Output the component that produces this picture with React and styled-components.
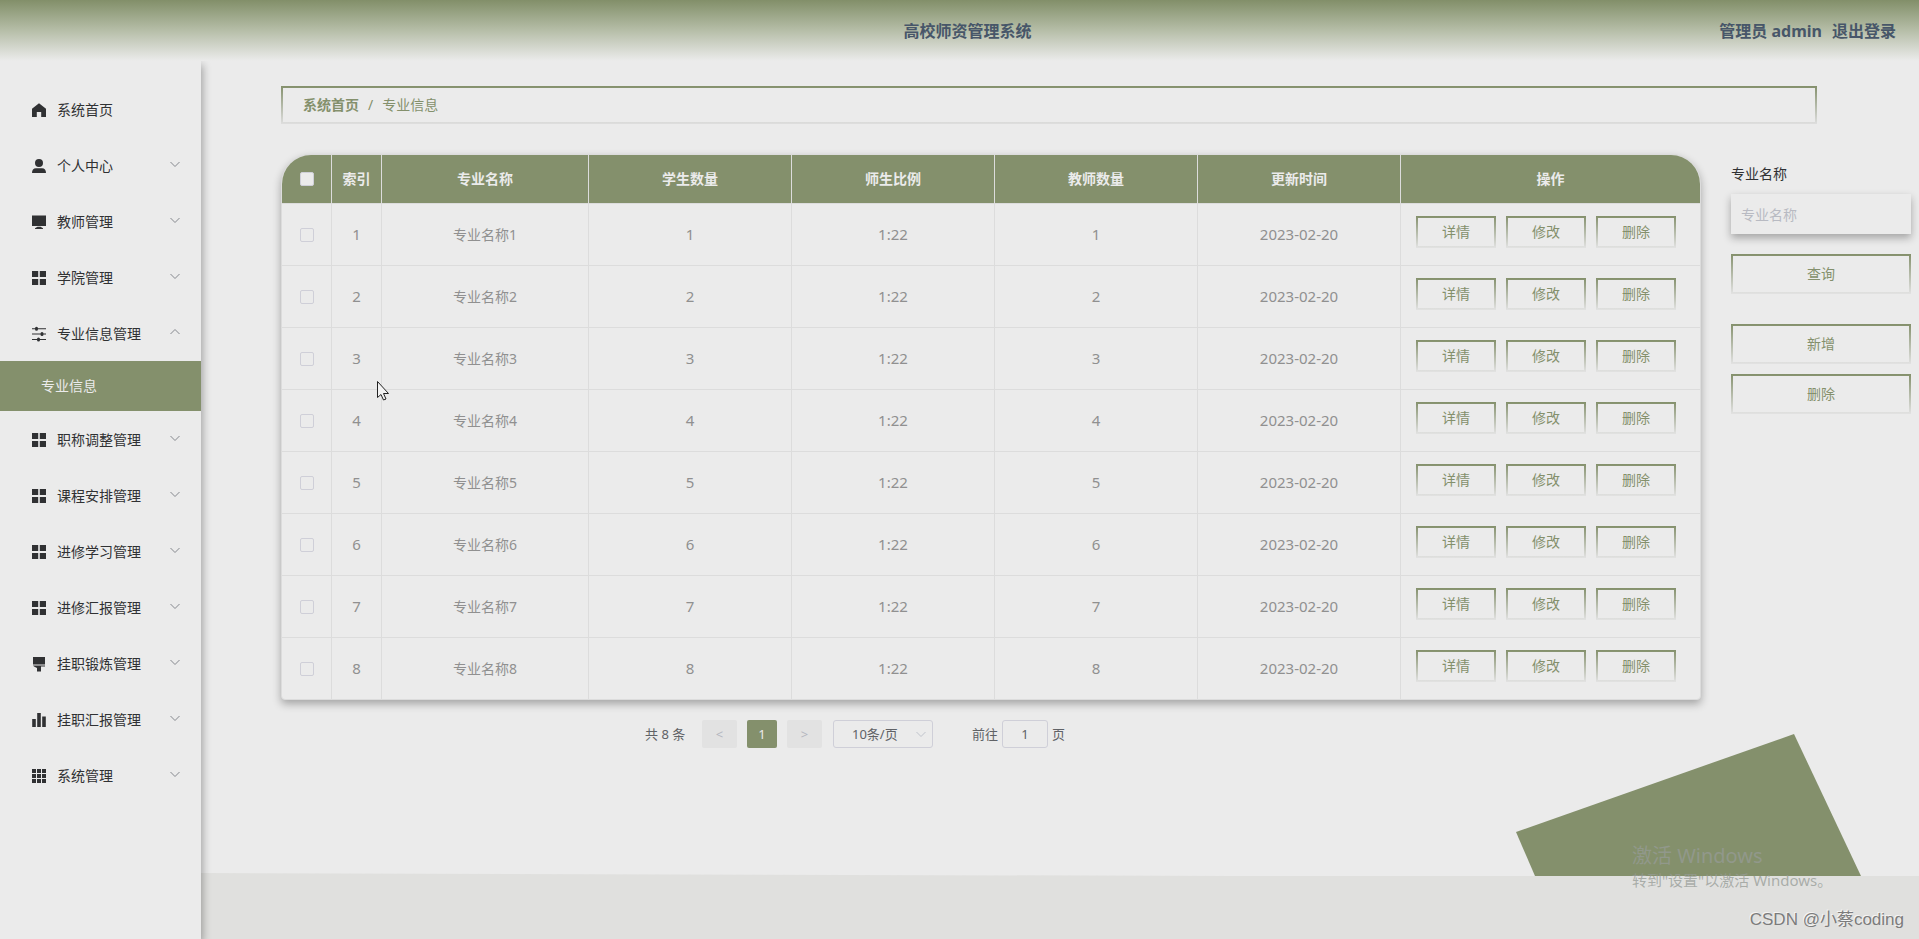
import React, { useState } from 'react';
import styled, { createGlobalStyle } from 'styled-components';

const GlobalStyle = createGlobalStyle`
* {
	box-sizing: border-box;
}
body {
	margin: 0;
	background-color: #ebebeb;
	color: #303133;
	font-family: "Noto Sans", "Noto Sans CJK SC", sans-serif;
	font-size: 14px;
	line-height: 20px;
}
button, input, select {
	font-family: inherit;
	font-size: 14px;
	line-height: 20px;
	margin: 0;
}
`;
const PageStyle = styled.div`
position: relative;
display: flex;
flex-direction: column;
min-height: 100vh;
overflow: hidden;
`;
const HeaderStyle = styled.header`
display: grid;
grid-template-columns: 1fr auto 1fr;
align-items: center;
height: 61px;
padding: 1px 23px 0 39px;
background: linear-gradient(#828f69, #b6bea8 50%, #ebebeb);
color: #475669;
font-size: 16px;
font-weight: 700;
`;
const TitleStyle = styled.h1`
grid-column: 2;
margin: 0;
font-size: 16px;
font-weight: 700;
`;
const UserStyle = styled.div`
display: flex;
justify-content: flex-end;
gap: 10px;
`;
const LogoutStyle = styled.a`
color: inherit;
text-decoration: none;
`;
const BodyStyle = styled.div`
display: flex;
flex: 1;
`;
const SideStyle = styled.nav`
width: 201px;
flex-shrink: 0;
padding-top: 20px;
background-color: #ebebeb;
box-shadow: 2px 4px 8px rgba(0, 0, 0, 0.3);
clip-path: inset(0 -12px 0 0);
`;
const MenuButton = styled.button`
display: flex;
align-items: center;
width: 100%;
height: 56px;
padding: 2px 20px 0 31px;
border: 0;
background: none;
color: #303133;
text-align: left;
cursor: pointer;
`;
const MenuText = styled.span`
flex: 1;
padding-left: 10px;
`;
const ArrowStyle = styled.svg`
width: 12px;
height: 12px;
margin-bottom: 4px;
fill: none;
stroke: #85888e;
transform: ${(props) => (props.$open ? 'rotate(180deg)' : 'none')};
`;
const SubLink = styled.a`
display: block;
padding: 15px 41px;
background-color: #84906c;
color: #ebebeb;
text-decoration: none;
`;
const MainStyle = styled.main`
flex: 1;
min-width: 0;
padding: 25px 8px 0 80px;
`;
const CrumbStyle = styled.div`
display: flex;
align-items: center;
height: 38px;
margin-right: 94px;
margin-bottom: 30px;
padding: 0 20px;
border: 2px solid;
border-image: linear-gradient(#84906c, #dedede) 2;
color: #84906c;
`;
const CrumbLink = styled.a`
color: #84906c;
font-weight: ${(props) => (props.$home ? 600 : 400)};
text-decoration: none;
`;
const SlashStyle = styled.span`
margin: 0 9px;
`;
const ContentStyle = styled.div`
display: flex;
align-items: flex-start;
gap: 30px;
`;
const ListStyle = styled.section`
flex: 1;
min-width: 0;
`;
const CardStyle = styled.div`
overflow: hidden;
border: 1px solid #dcdcdc;
border-radius: 30px 30px 4px 4px;
background-color: #ebebeb;
box-shadow: 0 4px 8px rgba(0, 0, 0, 0.3);
`;
const TableStyle = styled.table`
width: 100%;
table-layout: fixed;
border-collapse: separate;
border-spacing: 0;
text-align: center;
tr > *:last-child {
	border-right: 0;
}
tbody tr:last-child td {
	height: 61px;
	border-bottom: 0;
}
`;
const Th = styled.th`
width: ${(props) => props.$width || 'auto'};
height: 49px;
padding: 0;
border-right: 1px solid #dcdcdc;
border-bottom: 1px solid #dcdcdc;
background-color: #84906c;
color: #ebebeb;
font-weight: 700;
`;
const Td = styled.td`
height: 62px;
padding: ${(props) => (props.$number ? '0 0 2px' : '0')};
border-right: 1px solid #dcdcdc;
border-bottom: 1px solid #dcdcdc;
color: #909090;
font-size: ${(props) => (props.$number ? '15px' : '14px')};
`;
const CheckStyle = styled.input`
appearance: none;
display: block;
width: 14px;
height: 14px;
margin: 0 auto;
border: 1px solid #cfcfd8;
border-radius: 2px;
background-color: #ebebeb;
&:checked {
	background-color: #84906c;
}
`;
const ActionStyle = styled.div`
display: flex;
gap: 10px;
padding: 0 15px 5px;
`;
const LineButton = styled.button`
width: ${(props) => (props.$small ? '80px' : '100%')};
height: ${(props) => (props.$small ? '32px' : '40px')};
padding: 0;
border: 2px solid;
border-image: linear-gradient(#84906c, #e2e2e2) 2;
background: none;
color: #84906c;
cursor: pointer;
`;
const SearchStyle = styled.aside`
display: flex;
flex-direction: column;
width: 180px;
padding-top: 10px;
`;
const LabelStyle = styled.label`
margin-bottom: 10px;
`;
const SearchInput = styled.input`
width: 100%;
height: 40px;
margin-bottom: 20px;
padding: 0 10px;
border: 0;
background-color: #ebebeb;
box-shadow: 0 4px 8px rgba(0, 0, 0, 0.3);
&::placeholder {
	color: #b8bac2;
}
`;
const ToolStyle = styled.div`
display: flex;
flex-direction: column;
gap: 10px;
margin-top: 30px;
`;
const PagerStyle = styled.div`
display: flex;
align-items: center;
margin-top: 20px;
padding-left: 364px;
color: #606266;
font-size: 13px;
`;
const PageButton = styled.button`
width: ${(props) => (props.$active ? '30px' : '35px')};
height: 28px;
margin-right: 10px;
padding: 0;
border: 0;
border-radius: 2px;
background-color: ${(props) => (props.$active ? '#84906c' : '#e2e2e2')};
color: ${(props) => (props.$active ? '#ebebeb' : '#b4b6bf')};
font-size: 13px;
`;
const TotalStyle = styled.span`
width: 57px;
`;
const SelectWrap = styled.div`
display: grid;
align-items: center;
width: 100px;
margin-left: 1px;
margin-right: 39px;
> * {
	grid-area: 1 / 1;
}
svg {
	justify-self: end;
	margin: 0 6px 0 0;
	stroke: #c0c4cc;
	pointer-events: none;
}
`;
const SizeSelect = styled.select`
appearance: none;
width: 100%;
height: 28px;
padding: 0 18px;
border: 1px solid #cfcfd8;
border-radius: 3px;
background: none;
color: #606266;
font-size: 13px;
`;
const JumpLabel = styled.label`
display: flex;
align-items: center;
gap: 4px;
`;
const JumpInput = styled.input`
width: 46px;
height: 28px;
padding: 0;
border: 1px solid #cfcfd8;
border-radius: 3px;
background: none;
color: #606266;
font-size: 13px;
text-align: center;
`;
/* 页面底部背景 */
const BackStyle = styled.div`
position: absolute;
right: 0;
bottom: 0;
left: 201px;
z-index: -1;
height: 205px;
overflow: hidden;
`;
const BandStyle = styled.div`
position: absolute;
right: 0;
bottom: 0;
left: 0;
height: 66px;
background-color: #e0e0de;
clip-path: polygon(0 0, 60% 3px, 100% 3px, 100% 100%, 0 100%);
`;
const BlockStyle = styled.svg`
position: absolute;
right: 58px;
bottom: 63px;
width: 345px;
height: 142px;
`;
const WindowsMark = styled.div`
position: absolute;
right: 92px;
bottom: 47px;
width: 195px;
color: rgba(150, 155, 150, 0.75);
font-size: 15px;
line-height: 24px;
white-space: nowrap;
pointer-events: none;
`;
const WindowsTitle = styled.div`
font-size: 20px;
`;
const AuthorMark = styled.div`
position: absolute;
right: 15px;
bottom: 9px;
color: #7c7c7c;
font-family: "Liberation Sans", "Noto Sans CJK SC", sans-serif;
font-size: 17px;
text-shadow: -1px -1px 0 #f4f4f4;
pointer-events: none;
`;
const PointerStyle = styled.svg`
position: absolute;
top: 381px;
left: 377px;
width: 13px;
height: 20px;
pointer-events: none;
`;
const IconStyle = styled.svg`
width: 16px;
height: 16px;
flex-shrink: 0;
fill: #303133;
`;

const icons = {
	home: <path d="M8 1.200 1 6.800V15h4.800v-5h4.400v5H15V6.800z" />,
	user: <path d="M8 1a4 4 0 0 1 0 8 4 4 0 0 1 0-8zM5 10.200h6c2.600 0 4 1.800 4 4.800H1c0-3 1.400-4.800 4-4.800z" />,
	screen: <path d="M1 1.500h14V12H1zM6.500 12.800h3l2.500 1.400v.8H4v-.8z" />,
	menu: <path d="M1 1h6.200v6H1zM8.800 1H15v6H8.800zM1 9h6.200v6H1zM8.800 9H15v6H8.800z" />,
	slider: <path d="M1 2.300h3a1.500 1.500 0 0 1 3 0h8v1H7a1.500 1.500 0 0 1-3 0H1zM1 7.600h8.500a1.500 1.500 0 0 1 3 0H15v1h-2.500a1.500 1.500 0 0 1-3 0H1zM1 12.900h5a1.500 1.500 0 0 1 3 0h6v1H9a1.500 1.500 0 0 1-3 0H1z" />,
	brush: <path d="M2 1h12v7.500H2zM2 9.500h12v1H10V15.500H6V12L3 10.500z" />,
	chart: <path d="M1.200 7h3.600v8H1.200zM6.200 1h3.600v14H6.200zM11.200 4.500h3.600V15h-3.600z" />,
	grid: <path d="M1 1h4v4H1zM6 1h4v4H6zM11 1h4v4h-4zM1 6h4v4H1zM6 6h4v4H6zM11 6h4v4h-4zM1 11h4v4H1zM6 11h4v4H6zM11 11h4v4h-4z" />,
};

const menus = [
	{ name: "系统首页", icon: "home", link: true },
	{ name: "个人中心", icon: "user" },
	{ name: "教师管理", icon: "screen" },
	{ name: "学院管理", icon: "menu" },
	{ name: "专业信息管理", icon: "slider", child: "专业信息" },
	{ name: "职称调整管理", icon: "menu" },
	{ name: "课程安排管理", icon: "menu" },
	{ name: "进修学习管理", icon: "menu" },
	{ name: "进修汇报管理", icon: "menu" },
	{ name: "挂职锻炼管理", icon: "brush" },
	{ name: "挂职汇报管理", icon: "chart" },
	{ name: "系统管理", icon: "grid" },
];

const rows = [1, 2, 3, 4, 5, 6, 7, 8].map((n) => ({
	id: n,
	name: "专业名称" + n,
	student: n,
	ratio: "1:22",
	teacher: n,
	date: "2023-02-20",
}));

const Arrow = (props) => (
	<ArrowStyle viewBox="0 0 12 12" $open={props.open} aria-hidden="true">
		<path d="M1.500 4 6 8.500 10.500 4" />
	</ArrowStyle>
);

const Side = () => {
	const [open, setOpen] = useState("专业信息管理");

	return (
		<SideStyle>
			{menus.map((menu) => (
				<div key={menu.name}>
					<MenuButton type="button" onClick={() => setOpen(open === menu.name ? "" : menu.name)}>
						<IconStyle viewBox="0 0 16 16" aria-hidden="true">{icons[menu.icon]}</IconStyle>
						<MenuText>{menu.name}</MenuText>
						{!menu.link && <Arrow open={open === menu.name} />}
					</MenuButton>
					{menu.child && open === menu.name && <SubLink href="#major">{menu.child}</SubLink>}
				</div>
			))}
		</SideStyle>
	);
};

const MajorTable = () => {
	const [checked, setChecked] = useState([]);

	const toggle = (id) => {
		setChecked(checked.includes(id) ? checked.filter((c) => c !== id) : [...checked, id]);
	};
	const toggleAll = () => {
		setChecked(checked.length === rows.length ? [] : rows.map((row) => row.id));
	};

	return (
		<CardStyle>
			<TableStyle>
				<thead>
					<tr>
						<Th $width="50px">
							<CheckStyle type="checkbox" aria-label="全选" checked={checked.length === rows.length} onChange={toggleAll} />
						</Th>
						<Th $width="50px">索引</Th>
						<Th $width="207px">专业名称</Th>
						<Th>学生数量</Th>
						<Th>师生比例</Th>
						<Th>教师数量</Th>
						<Th>更新时间</Th>
						<Th $width="299px">操作</Th>
					</tr>
				</thead>
				<tbody>
					{rows.map((row) => (
						<tr key={row.id}>
							<Td>
								<CheckStyle type="checkbox" aria-label={row.name} checked={checked.includes(row.id)} onChange={() => toggle(row.id)} />
							</Td>
							<Td $number>{row.id}</Td>
							<Td>{row.name}</Td>
							<Td $number>{row.student}</Td>
							<Td $number>{row.ratio}</Td>
							<Td $number>{row.teacher}</Td>
							<Td $number>{row.date}</Td>
							<Td>
								<ActionStyle>
									<LineButton type="button" $small>详情</LineButton>
									<LineButton type="button" $small>修改</LineButton>
									<LineButton type="button" $small>删除</LineButton>
								</ActionStyle>
							</Td>
						</tr>
					))}
				</tbody>
			</TableStyle>
		</CardStyle>
	);
};

const Pager = () => (
	<PagerStyle>
		<TotalStyle>共 8 条</TotalStyle>
		<PageButton type="button" disabled>&lt;</PageButton>
		<PageButton type="button" $active>1</PageButton>
		<PageButton type="button" disabled>&gt;</PageButton>
		<SelectWrap>
			<SizeSelect aria-label="每页条数" defaultValue="10">
				<option value="10">10条/页</option>
				<option value="20">20条/页</option>
			</SizeSelect>
			<Arrow />
		</SelectWrap>
		<JumpLabel>
			前往
			<JumpInput type="text" defaultValue="1" />
			页
		</JumpLabel>
	</PagerStyle>
);

const App = () => {
	return (
		<PageStyle>
			<GlobalStyle />
			<BackStyle>
				<BandStyle />
				<BlockStyle viewBox="0 0 345 142" aria-hidden="true">
					<path d="M0 98 278 0 345 142H19z" fill="#84906c" />
				</BlockStyle>
			</BackStyle>
			<HeaderStyle>
				<TitleStyle>高校师资管理系统</TitleStyle>
				<UserStyle>
					<span>管理员 admin</span>
					<LogoutStyle href="#logout">退出登录</LogoutStyle>
				</UserStyle>
			</HeaderStyle>
			<BodyStyle>
				<Side />
				<MainStyle>
					<CrumbStyle>
						<CrumbLink href="#home" $home>系统首页</CrumbLink>
						<SlashStyle>/</SlashStyle>
						<CrumbLink href="#major">专业信息</CrumbLink>
					</CrumbStyle>
					<ContentStyle>
						<ListStyle>
							<MajorTable />
							<Pager />
						</ListStyle>
						<SearchStyle>
							<LabelStyle htmlFor="name">专业名称</LabelStyle>
							<SearchInput id="name" type="text" placeholder="专业名称" />
							<LineButton type="button">查询</LineButton>
							<ToolStyle>
								<LineButton type="button">新增</LineButton>
								<LineButton type="button">删除</LineButton>
							</ToolStyle>
						</SearchStyle>
					</ContentStyle>
				</MainStyle>
			</BodyStyle>
			<WindowsMark>
				<WindowsTitle>激活 Windows</WindowsTitle>
				转到"设置"以激活 Windows。
			</WindowsMark>
			<AuthorMark>CSDN @小蔡coding</AuthorMark>
			<PointerStyle viewBox="0 0 13 20" aria-hidden="true">
				<path d="M.5.500V16.500L4 13.500 6.500 19 9 18 6.500 12.500H11.500z" fill="#f4f4f4" stroke="#222" />
			</PointerStyle>
		</PageStyle>
	);
};

export default App;
